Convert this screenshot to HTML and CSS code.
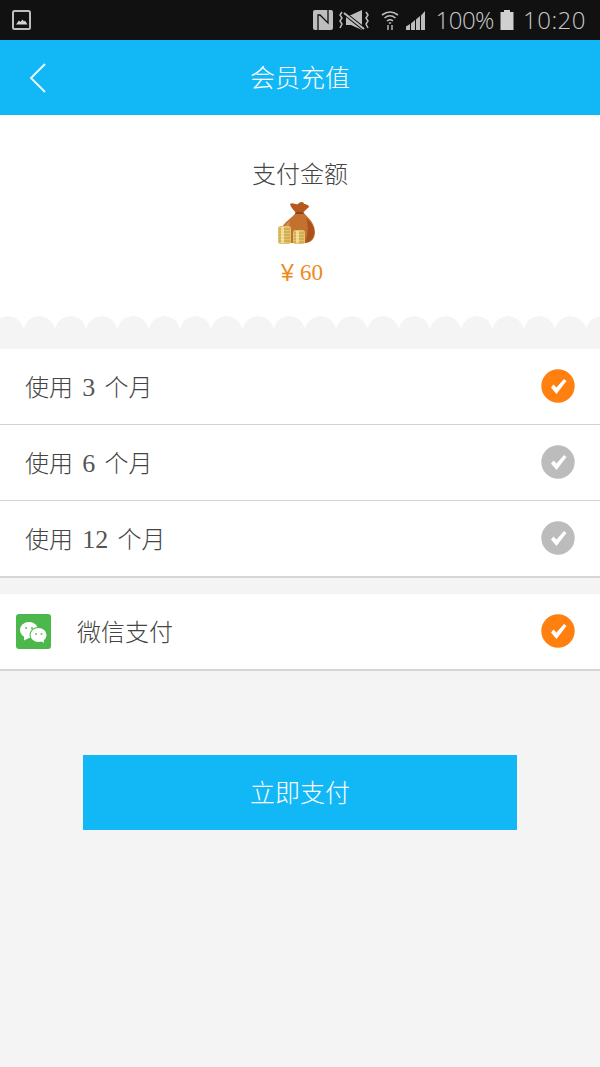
FILE: index.html
```html
<!DOCTYPE html>
<html lang="zh-CN">
<head>
    <meta charset="UTF-8">
    <meta name="viewport" content="width=device-width, initial-scale=1.0">
    <title>会员充值</title>
    <link rel="stylesheet" href="styles.css">
</head>
<body>
    <div class="status-bar">
        <svg class="status-pic" width="20" height="20" viewBox="0 0 20 20">
            <rect x="1" y="1" width="17" height="18" rx="1.5" fill="none" stroke="#bdbdbd" stroke-width="2"/>
            <path d="M4 14.5 L7 10.5 L8.5 12 L10.5 9.5 L12 11.5 L13 10.5 L15.5 14.5 Z" fill="#d4d4d4"/>
        </svg>
        <div class="status-right">
            <svg width="20" height="20" viewBox="0 0 20 20">
                <rect x="0" y="0" width="20" height="20" rx="2" fill="#bdbdbd"/>
                <path d="M5 20 V5 H7 L15 13 V0" fill="none" stroke="#111" stroke-width="1.3"/>
            </svg>
            <svg width="30" height="20" viewBox="0 0 30 20">
                <path d="M7 5 H12 L23 0 V20 L12 15 H7 Z" fill="#bdbdbd"/>
                <path d="M5 3 L25 19" stroke="#111" stroke-width="4"/>
                <path d="M5 3 L25 19" stroke="#bdbdbd" stroke-width="2"/>
                <path d="M3 2 L1 5 L3 8 L1 11 L3 14 L1 18 M27 2 L29 5 L27 8 L29 11 L27 14 L29 18" fill="none" stroke="#bdbdbd" stroke-width="1.5"/>
            </svg>
            <svg class="status-wifi" width="18" height="20" viewBox="0 0 18 20">
                <path d="M1 5 Q9 -1 17 5 M3.5 8 Q9 3.5 14.5 8 M6 11 Q9 8.5 12 11" fill="none" stroke="#bdbdbd" stroke-width="1.6"/>
                <path d="M7.8 12 H10.2 V14 H7.8 Z M6 15 H8 V20 H6 Z M10 15 H12 V20 H10 Z" fill="#8a8a8a"/>
            </svg>
            <svg class="status-signal" width="21" height="20" viewBox="0 0 21 20">
                <path d="M1 20 V16.5 L5 14 V20 Z M6 20 V13.5 L10 10 V20 Z M11 20 V9.5 L15 6 V20 Z M16 20 V5.5 L20 1 V20 Z" fill="#bdbdbd"/>
            </svg>
            <span class="status-text status-pct">100%</span>
            <svg class="status-battery" width="14" height="20" viewBox="0 0 14 20">
                <path d="M4 0 H10 V2 H13.5 V20 H0.5 V2 H4 Z" fill="#d0d0d0"/>
            </svg>
            <span class="status-text status-time">10:20</span>
        </div>
    </div>

    <header class="topbar">
        <svg class="back" width="20" height="32" viewBox="0 0 20 32">
            <path d="M17 2 L3 16 L17 30" fill="none" stroke="#e6f7fe" stroke-width="2"/>
        </svg>
        <h1>会员充值</h1>
    </header>

    <section class="amount">
        <p class="amount-label">支付金额</p>
        <svg class="bag" width="40" height="46" viewBox="0 0 40 46">
            <path d="M14 3 C17 1 19 4 22 3 C25 0 28 1 28 3 C30 3 33 4 33 6 C31 8 29 9 27 12 L20 12 C18 9 15 7 14 3 Z" fill="#b5591f"/>
            <path d="M20 11 L27 11 C30 15 39 21 39 31 C39 39 34 42 28 42 L10 42 C5 41 3 35 5 29 C7 21 17 17 20 11 Z" fill="#c4702f"/>
            <path d="M20 11 L27 11 L28 13 L19 13 Z" fill="#8f4516"/>
            <path d="M30 17 C35 21 39 26 38 33 C37 39 33 41 29 42 C32 34 33 25 30 17 Z" fill="#a9521c"/>
            <path d="M14 20 C11 22 9 25 8 27 L13 25 Z" fill="#d98c4e"/>
            <rect x="2" y="25" width="13" height="18" rx="2.5" fill="#e2c26a"/>
            <path d="M3 28 H14 M3 31 H14 M3 34 H14 M3 37 H14 M3 40 H14" stroke="#b8923c" stroke-width="0.8"/>
            <rect x="5" y="26" width="3" height="16" fill="#fbeeb4" opacity="0.7"/>
            <rect x="17" y="29" width="12" height="14" rx="2.5" fill="#e2c26a"/>
            <path d="M18 32 H28 M18 35 H28 M18 38 H28 M18 41 H28" stroke="#b8923c" stroke-width="0.8"/>
            <rect x="20" y="30" width="3" height="12" fill="#fbeeb4" opacity="0.7"/>
        </svg>
        <p class="amount-price"><span class="amount-yen">¥</span><span class="amount-num">60</span></p>
    </section>
    <div class="scallop"></div>

    <ul class="list">
        <li class="row">
            <span>使用 <b>3</b> 个月</span>
            <svg class="check check-on" width="34" height="34" viewBox="0 0 34 34"><circle cx="17" cy="17" r="16.7"/><path d="M10 18.5 L12.5 15.5 L15.5 18.5 L23 10 L25.5 12 L15.5 25 Z"/></svg>
        </li>
        <li class="row">
            <span>使用 <b>6</b> 个月</span>
            <svg class="check check-off" width="34" height="34" viewBox="0 0 34 34"><circle cx="17" cy="17" r="16.7"/><path d="M10 18.5 L12.5 15.5 L15.5 18.5 L23 10 L25.5 12 L15.5 25 Z"/></svg>
        </li>
        <li class="row">
            <span>使用 <b>12</b> 个月</span>
            <svg class="check check-off" width="34" height="34" viewBox="0 0 34 34"><circle cx="17" cy="17" r="16.7"/><path d="M10 18.5 L12.5 15.5 L15.5 18.5 L23 10 L25.5 12 L15.5 25 Z"/></svg>
        </li>
    </ul>

    <div class="list pay">
        <div class="row">
            <div class="pay-name">
                <svg class="pay-icon" width="35" height="35" viewBox="0 0 35 35">
                    <rect width="35" height="35" rx="3" fill="#4cb84b"/>
                    <ellipse cx="13" cy="16" rx="9" ry="8" fill="#fff"/>
                    <path d="M8 22 L8 26.5 L13 24 Z" fill="#fff"/>
                    <ellipse cx="22.5" cy="21" rx="9" ry="8" fill="#4cb84b"/>
                    <ellipse cx="22.5" cy="21" rx="8" ry="7" fill="#fff"/>
                    <path d="M25 27 L28 29 L27.5 25 Z" fill="#fff"/>
                    <circle cx="10" cy="14" r="1.1" fill="#6cc06a"/>
                    <circle cx="16" cy="14" r="1.1" fill="#6cc06a"/>
                    <circle cx="20" cy="20" r="1" fill="#6cc06a"/>
                    <circle cx="25.5" cy="20" r="1" fill="#6cc06a"/>
                </svg>
                <span>微信支付</span>
            </div>
            <svg class="check check-on" width="34" height="34" viewBox="0 0 34 34"><circle cx="17" cy="17" r="16.7"/><path d="M10 18.5 L12.5 15.5 L15.5 18.5 L23 10 L25.5 12 L15.5 25 Z"/></svg>
        </div>
    </div>

    <div class="pay-action">
        <button class="pay-btn">立即支付</button>
    </div>
</body>
</html>
```

FILE: styles.css
```css
* { box-sizing: border-box; }

body {
  margin: 0;
  height: 1067px;
  overflow: hidden;
  background: #f4f4f4;
  color: #444;
  font-family: "Noto Sans CJK SC", "Liberation Serif", sans-serif;
  font-weight: 300;
}

/* Status bar */
.status-bar {
  height: 40px;
  background: #111;
  display: flex;
  align-items: center;
  justify-content: space-between;
  padding: 0 14px 0 12px;
}

.status-right {
  display: flex;
  align-items: center;
  gap: 6px;
}

.status-text {
  font-family: "Open Sans", sans-serif;
  font-size: 24px;
  font-weight: 300;
  color: #c8c8c8;
  line-height: 40px;
}

.status-wifi { margin-left: 6px; }
.status-pct { margin-left: 4px; letter-spacing: -0.5px; }
.status-time { margin-left: 3px; letter-spacing: 0.5px; }

/* Header */
.topbar {
  height: 75px;
  background: #12b7f5;
  display: flex;
  align-items: center;
  justify-content: center;
  padding-bottom: 3px;
  position: relative;
}

.topbar h1 {
  margin: 0;
  font-size: 25px;
  font-weight: 300;
  color: #fff;
}

.back {
  position: absolute;
  left: 28px;
  top: 22px;
}

/* Amount */
.amount {
  height: 201px;
  background: #fff;
  display: flex;
  flex-direction: column;
  align-items: center;
  padding-top: 41px;
}

.amount p { margin: 0; }

.amount-label {
  font-size: 24px;
  line-height: 34px;
}

.bag { margin: 11px 8px 0 0; }

.amount p.amount-price {
  margin-top: 11px;
  color: #ee8a1d;
  line-height: 30px;
  padding-left: 4px;
  display: flex;
  align-items: center;
  gap: 6px;
}

.amount-yen {
  font-family: "Liberation Sans", sans-serif;
  font-size: 23px;
}

.amount-num {
  font-family: "Liberation Serif", serif;
  font-size: 23px;
}

.scallop {
  height: 33px;
  background:
    radial-gradient(circle at 50% 16px, #f4f4f4 15.5px, #fff 16px) -7.6px 0 / 31.25px 16px repeat-x,
    #f4f4f4;
}

/* Rows */
.list {
  margin: 0;
  padding: 0;
  list-style: none;
  background: #fff;
  border-bottom: 2px solid #d6d6d6;
}

.row {
  height: 76px;
  display: flex;
  align-items: center;
  justify-content: space-between;
  padding: 0 25px 2px;
  font-size: 24px;
  word-spacing: 4px;
  border-bottom: 1px solid #d2d2d2;
}

.list > .row:last-child { border-bottom: 0; height: 75px; }

.row b {
  font-family: "Liberation Serif", serif;
  font-weight: 400;
  font-size: 26px;
  color: #555;
}

.check path { fill: #fff; }
.check-on circle { fill: #ff7f0f; }
.check-off circle { fill: #bcbcbc; }

/* Pay method */
.pay { margin-top: 16px; }

.pay .row { padding-left: 16px; }

.pay-name {
  display: flex;
  align-items: center;
  gap: 26px;
}

.pay-icon { margin-top: 2px; }

/* Button */
.pay-action {
  display: flex;
  justify-content: center;
  padding-top: 84px;
}

.pay-btn {
  width: 434px;
  height: 75px;
  padding: 0 0 3px;
  border: 0;
  background: #12b7f5;
  color: #fff;
  font-family: inherit;
  font-size: 25px;
  font-weight: 300;
}
```
